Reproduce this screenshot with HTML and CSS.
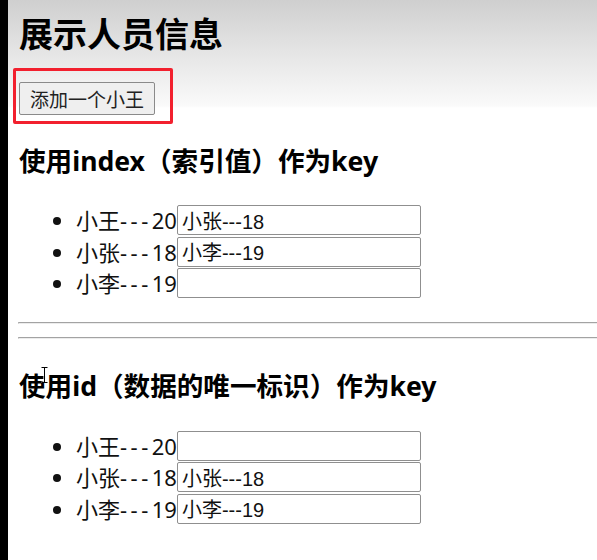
FILE: index.html
```html
<!DOCTYPE html>
<html lang="zh-CN">
<head>
<meta charset="utf-8">
<title>展示人员信息</title>
<link rel="stylesheet" href="styles.css">
</head>
<body>
<div class="page">
  <h1 class="title">展示人员信息</h1>
  <div class="highlight">
    <button class="btn" type="button">添加一个小王</button>
  </div>

  <h2 class="subtitle">使用index（索引值）作为key</h2>
  <ul class="people">
    <li class="person"><span class="label">小王<span class="dash">---</span>20</span><input class="field" type="text" value="小张---18"></li>
    <li class="person"><span class="label">小张<span class="dash">---</span>18</span><input class="field" type="text" value="小李---19"></li>
    <li class="person"><span class="label">小李<span class="dash">---</span>19</span><input class="field" type="text" value=""></li>
  </ul>

  <hr class="rule rule-first">
  <hr class="rule rule-second">

  <h2 class="subtitle subtitle-second">使用id（数据的唯一标识）作为key</h2>
  <ul class="people people-second">
    <li class="person"><span class="label">小王<span class="dash">---</span>20</span><input class="field" type="text" value=""></li>
    <li class="person"><span class="label">小张<span class="dash">---</span>18</span><input class="field" type="text" value="小张---18"></li>
    <li class="person"><span class="label">小李<span class="dash">---</span>19</span><input class="field" type="text" value="小李---19"></li>
  </ul>

  <svg class="cursor" width="7" height="16" viewBox="0 0 7 16" aria-hidden="true">
    <path d="M0.5 0.5h6M3.5 0.5v15M0.5 15.5h6" stroke="#fff" stroke-width="2.2" fill="none"/>
    <path d="M0.5 0.5h6M3.5 0.5v15M0.5 15.5h6" stroke="#000" stroke-width="1" fill="none"/>
  </svg>
</div>
</body>
</html>
```

FILE: styles.css
```css
html, body {
  margin: 0;
  padding: 0;
  background: #fff;
}

body {
  font-family: "Noto Sans", "Noto Sans CJK SC", sans-serif;
  color: #111;
}

.page {
  position: relative;
  box-sizing: border-box;
  min-height: 560px;
  border-left: 8px solid #000;
  padding: 13px 0 0 11px;
  background: linear-gradient(#cfcfcf 0, #e4e4e4 50px, #fafafa 106px, #fff 108px) no-repeat;
  background-size: 100% 108px;
  overflow: hidden;
}

.title {
  margin: 0;
  font-family: "Noto Sans CJK SC", sans-serif;
  font-size: 34px;
  font-weight: 700;
  line-height: 40px;
  color: #000;
}

.highlight {
  display: flex;
  width: fit-content;
  margin: 15px 0 0 -6px;
  padding: 11px 15px 6px 3px;
  border: 3px solid #f2202e;
  border-radius: 2px;
}

.btn {
  box-sizing: border-box;
  height: 33px;
  padding: 0 10px;
  font-family: "Noto Sans CJK SC", sans-serif;
  font-size: 19px;
  line-height: 31px;
  color: #222;
  background: #efefef;
  border: 1px solid #8a8a8a;
  border-radius: 2px;
}

.subtitle {
  margin: 21px 0 0;
  font-family: "Noto Sans", "Noto Sans CJK SC", sans-serif;
  font-size: 26.6px;
  font-weight: 700;
  line-height: 32px;
  color: #000;
}

.subtitle-second {
  margin-top: 31px;
}

.people {
  margin: 28px 0 0;
  padding-left: 57px;
  font-size: 22px;
}

.people-second {
  margin-top: 29px;
}

.person {
  height: 31.5px;
  line-height: 30px;
}

.label {
  vertical-align: top;
}

.dash {
  letter-spacing: 3.5px;
}

.field {
  box-sizing: border-box;
  width: 244px;
  height: 30px;
  margin: 0;
  padding: 0 4px;
  vertical-align: top;
  font-family: "Liberation Sans", "Noto Sans CJK SC", sans-serif;
  font-size: 20px;
  color: #111;
  background: #fff;
  border: 1px solid #8f8f8f;
  border-radius: 2px;
}

.rule {
  height: 0;
  margin: 22px 0 0 -1px;
  border: 0;
  border-top: 1px solid #a3a3a3;
  border-bottom: 1px solid #ececec;
  border-left: 1px solid #bdbdbd;
}

.rule-second {
  margin-top: 13px;
}

.cursor {
  position: absolute;
  left: 33px;
  top: 367px;
}
```
